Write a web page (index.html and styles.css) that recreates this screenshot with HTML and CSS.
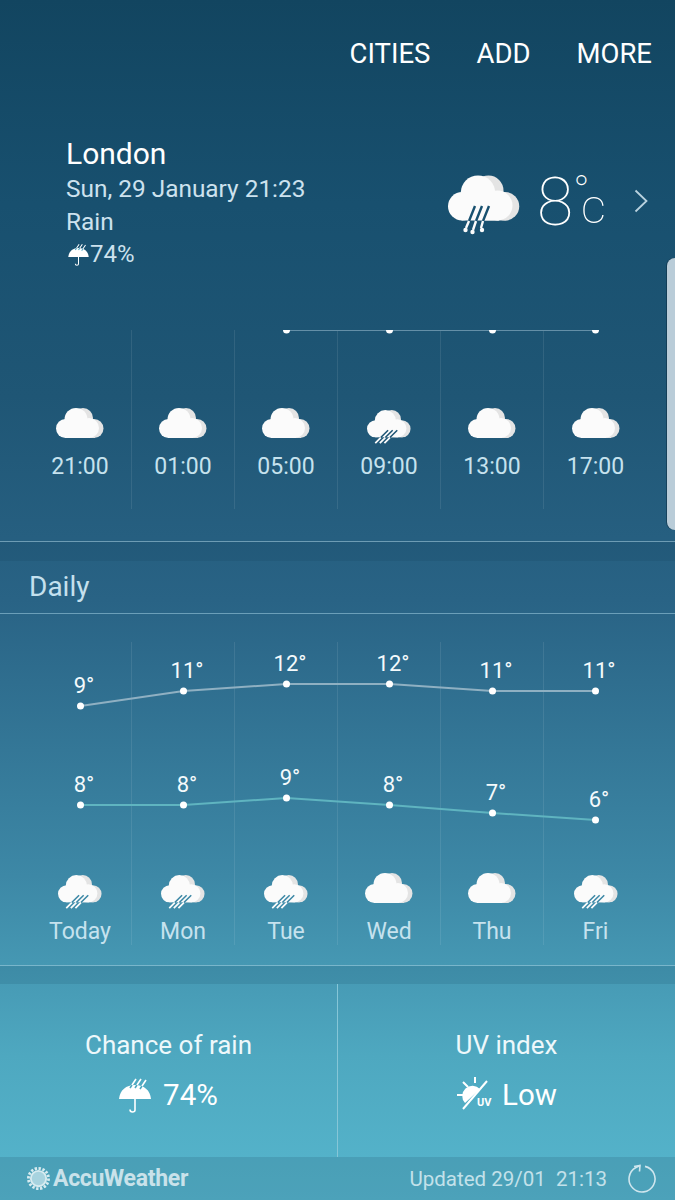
FILE: index.html
```html
<!DOCTYPE html>
<html lang="en">
<head>
<meta charset="utf-8">
<title>Weather</title>
<link rel="stylesheet" href="styles.css">
</head>
<body>
<svg class="defs" aria-hidden="true">
  <defs>
    <symbol id="cloud" viewBox="0 0 48 30">
      <circle cx="27" cy="10" r="10" fill="#e4e4e4"/>
      <circle cx="38" cy="20.5" r="9.5" fill="#e4e4e4"/>
      <rect x="24" y="14" width="15" height="16" fill="#e4e4e4"/>
      <circle cx="9.5" cy="20.5" r="9.5" fill="#fbfbfb"/>
      <circle cx="20" cy="11.5" r="11.5" fill="#fbfbfb"/>
      <circle cx="33" cy="20" r="10" fill="#fbfbfb"/>
      <rect x="9" y="16" width="25" height="14" fill="#fbfbfb"/>
    </symbol>
    <symbol id="cloud-rain" viewBox="0 0 48 37">
      <use href="#cloud" width="48" height="30"/>
      <g fill="none" stroke-width="1.700" stroke="currentColor">
        <path d="M23 22 15 30M28 22 20 30M33 22 25 30"/>
      </g>
      <g fill="none" stroke-width="1.900" stroke="#fbfbfb">
        <path d="M15 30 9 36M20 30 14 36M25 30 19 36"/>
      </g>
    </symbol>
    <symbol id="cloud-big" viewBox="0 0 72 60">
      <use href="#cloud" width="72" height="46"/>
      <g fill="none" stroke-width="2.400" stroke="currentColor">
        <path d="M27 31 21 46M34 31 28 46M41 31 35 46"/>
      </g>
      <g fill="#fbfbfb">
        <circle cx="17.500" cy="55" r="2.200"/>
        <circle cx="24.500" cy="57" r="2.200"/>
        <circle cx="34" cy="55" r="2.200"/>
      </g>
      <g fill="none" stroke-width="2.400" stroke="#fbfbfb">
        <path d="M21 46 18 53M28 46 25 55M35 46 33 53"/>
      </g>
    </symbol>
    <symbol id="umbrella" viewBox="0 0 32 36">
      <path d="M0 22C1 13 7 8 16 8s15 5 16 14Z" fill="#fff"/>
      <path d="M11 11 17 2M16 11 22 2M21 12 27 3" fill="none" stroke="#fff" stroke-width="1.600"/>
      <path d="M11 11 13 8M16 11 18 8M21 12 23 9" fill="none" stroke="#4fa9c1" stroke-width="1.600"/>
      <path d="M16 22V33Q16 35 13.500 35T11 32.500" fill="none" stroke="#fff" stroke-width="1.600"/>
    </symbol>
  </defs>
</svg>

<div class="screen">
  <nav class="topbar">
    <span>CITIES</span>
    <span>ADD</span>
    <span>MORE</span>
  </nav>

  <header class="current">
    <div class="place">
      <h1 class="city">London</h1>
      <p class="line">Sun, 29 January 21:23</p>
      <p class="line">Rain</p>
      <p class="line rain-line"><svg class="umbrella-small"><use href="#umbrella"/></svg>74%</p>
    </div>
    <div class="now">
      <svg class="cloud-big"><use href="#cloud-big"/></svg>
      <div class="temp"><span class="temp-num">8</span><span class="temp-deg">°</span><span class="temp-unit">c</span></div>
      <svg class="chevron" viewBox="0 0 14 24"><path d="M1.500 1.500 12.500 12 1.500 22.500" fill="none" stroke="#b9d2df" stroke-width="1.800"/></svg>
    </div>
  </header>

  <section class="hourly">
    <svg class="hourly-line" viewBox="0 0 675 4"><path d="M285 0.500H595" stroke="#648fa7" stroke-width="1"/><circle cx="285.500" cy="0" r="3.500" fill="#fff"/><circle cx="388.500" cy="0" r="3.500" fill="#fff"/><circle cx="491.500" cy="0" r="3.500" fill="#fff"/><circle cx="594.500" cy="0" r="3.500" fill="#fff"/></svg>
    <div class="col"><div class="icon-box"><svg class="cloud"><use href="#cloud"/></svg></div><span class="label">21:00</span></div>
    <div class="col"><div class="icon-box"><svg class="cloud"><use href="#cloud"/></svg></div><span class="label">01:00</span></div>
    <div class="col"><div class="icon-box"><svg class="cloud"><use href="#cloud"/></svg></div><span class="label">05:00</span></div>
    <div class="col"><div class="icon-box"><svg class="cloud-rain"><use href="#cloud-rain"/></svg></div><span class="label">09:00</span></div>
    <div class="col"><div class="icon-box"><svg class="cloud"><use href="#cloud"/></svg></div><span class="label">13:00</span></div>
    <div class="col"><div class="icon-box"><svg class="cloud"><use href="#cloud"/></svg></div><span class="label">17:00</span></div>
  </section>

  <div class="band band-daily"></div>
  <h2 class="daily-title">Daily</h2>

  <section class="daily">
    <svg class="chart" viewBox="0 0 675 303">
      <polyline class="hi" points="79.500,64 182.500,49 285.500,42 388.500,42 491.500,49 594.500,49"/>
      <polyline class="lo" points="79.500,163 182.500,163 285.500,156 388.500,163 491.500,171 594.500,178"/>
      <g class="dots">
        <circle cx="79.500" cy="64" r="3.500"/><circle cx="182.500" cy="49" r="3.500"/><circle cx="285.500" cy="42" r="3.500"/><circle cx="388.500" cy="42" r="3.500"/><circle cx="491.500" cy="49" r="3.500"/><circle cx="594.500" cy="49" r="3.500"/>
        <circle cx="79.500" cy="163" r="3.500"/><circle cx="182.500" cy="163" r="3.500"/><circle cx="285.500" cy="156" r="3.500"/><circle cx="388.500" cy="163" r="3.500"/><circle cx="491.500" cy="171" r="3.500"/><circle cx="594.500" cy="178" r="3.500"/>
      </g>
      <g class="temps">
        <text x="83" y="51">9°</text><text x="186" y="36">11°</text><text x="289" y="29">12°</text><text x="392" y="29">12°</text><text x="495" y="36">11°</text><text x="598" y="36">11°</text>
        <text x="83" y="150">8°</text><text x="186" y="150">8°</text><text x="289" y="143">9°</text><text x="392" y="150">8°</text><text x="495" y="158">7°</text><text x="598" y="165">6°</text>
      </g>
    </svg>
    <div class="col"><div class="icon-box"><svg class="cloud-rain"><use href="#cloud-rain"/></svg></div><span class="label">Today</span></div>
    <div class="col"><div class="icon-box"><svg class="cloud-rain"><use href="#cloud-rain"/></svg></div><span class="label">Mon</span></div>
    <div class="col"><div class="icon-box"><svg class="cloud-rain"><use href="#cloud-rain"/></svg></div><span class="label">Tue</span></div>
    <div class="col"><div class="icon-box"><svg class="cloud"><use href="#cloud"/></svg></div><span class="label">Wed</span></div>
    <div class="col"><div class="icon-box"><svg class="cloud"><use href="#cloud"/></svg></div><span class="label">Thu</span></div>
    <div class="col"><div class="icon-box"><svg class="cloud-rain"><use href="#cloud-rain"/></svg></div><span class="label">Fri</span></div>
  </section>

  <div class="band band-cards"></div>

  <section class="cards">
    <div class="card">
      <h3 class="card-title">Chance of rain</h3>
      <div class="card-value"><svg class="umbrella-big"><use href="#umbrella"/></svg><span>74%</span></div>
    </div>
    <div class="card card-uv">
      <h3 class="card-title">UV index</h3>
      <div class="card-value">
        <svg class="uv" viewBox="0 0 40 36">
          <path d="M7 32 31 4" stroke="#fff" stroke-width="2" fill="none"/>
          <path d="M9 26A10 10 0 0 1 24 12Z" fill="#fff"/>
          <path d="M19 0V6M7 5 12 10M1 18H7" stroke="#fff" stroke-width="2" fill="none"/>
          <text class="uv-text" x="21" y="29">UV</text>
        </svg>
        <span>Low</span>
      </div>
    </div>
  </section>

  <footer class="footer">
    <div class="brand">
      <svg class="sun" viewBox="0 0 24 24">
        <circle cx="12" cy="12" r="8" fill="#a7d3df" stroke="#d7ebf0" stroke-width="2"/>
        <circle cx="12" cy="12" r="10.500" fill="none" stroke="#d7ebf0" stroke-width="3" stroke-dasharray="2.500 1.600"/>
      </svg>
      <span class="brand-name">AccuWeather</span>
    </div>
    <div class="updated">
      <span class="updated-text">Updated 29/01&nbsp;&nbsp;21:13</span>
      <svg class="refresh" viewBox="0 0 30 30"><path d="M18 2.350A13 13 0 1 1 9 3.500L13 1.500" fill="none" stroke="#cfe6ee" stroke-width="1.600"/><path d="M7 2.500 13 1.500 12.500 7.500" fill="none" stroke="#cfe6ee" stroke-width="1.600"/></svg>
    </div>
  </footer>

  <div class="edge-handle"></div>
</div>
</body>
</html>
```

FILE: styles.css
```css
* { box-sizing: border-box; }
html, body { margin: 0; padding: 0; }
body { font-family: Roboto, "Liberation Sans", sans-serif; }
h1, h2, h3, p { margin: 0; font-weight: 400; }
.defs { position: absolute; width: 0; height: 0; }

.screen {
  position: relative;
  width: 675px;
  height: 1200px;
  overflow: hidden;
  display: flex;
  flex-direction: column;
  background: linear-gradient(180deg, #124560 0%, #18506f 17%, #1f5675 33%, #296385 50%, #3d88a6 73%, #4ea8c0 88%, #56b6cd 100%);
}

.topbar {
  height: 110px;
  padding: 39px 23px 0 0;
  display: flex;
  justify-content: flex-end;
  gap: 46px;
  font-size: 27.500px;
  line-height: 30px;
  color: #fff;
}

.current {
  height: 220px;
  padding: 26px 27px 0 66px;
  display: flex;
  justify-content: space-between;
  align-items: flex-start;
}
.city { font-size: 30px; line-height: 36px; color: #fff; }
.line { font-size: 24.400px; line-height: 33px; color: #cde2ee; }
.rain-line { display: flex; align-items: center; font-size: 24px; }
.umbrella-small { width: 21px; height: 23px; margin: 0 1px 0 2px; }
.now { display: flex; align-items: flex-start; padding-top: 33px; color: #18506f; }
.cloud-big { width: 72px; height: 60px; margin-top: 6px; }
.temp { position: relative; width: 85px; margin-left: 19px; height: 60px; color: #fff; font-weight: 100; }
.temp-num { position: absolute; left: -2px; top: -5px; font-size: 66px; line-height: 78px; }
.temp-deg { position: absolute; left: 34px; top: -3px; width: 8px; height: 24px; font-size: 44px; line-height: 52px; }
.temp-unit { position: absolute; left: 42px; top: 10px; font-size: 49px; line-height: 56px; }
.chevron { width: 14px; height: 24px; margin: 20px 0 0 10px; }

.hourly, .daily {
  position: relative;
  margin-left: 29px;
  width: 618px;
  display: grid;
  grid-template-columns: repeat(6, 103px);
}
.hourly { height: 179px; color: #1f5675; }
.hourly-line { position: absolute; left: -28px; top: 0; width: 675px; height: 4px; }
.col {
  display: flex;
  flex-direction: column;
  align-items: center;
  border-right: 1px solid rgba(255, 255, 255, 0.09);
}
.col:last-of-type { border-right: 0; }
.hourly .col { padding-top: 78px; }
.daily .col { padding-top: 231px; }
.icon-box { height: 36px; display: flex; justify-content: center; align-items: flex-start; }
.cloud { width: 48px; height: 30px; }
.cloud-rain { width: 44px; height: 34px; margin-top: 2px; }
.label { margin-top: 9px; font-size: 23px; line-height: 27px; color: #c6e2ee; }

.band { background: rgba(10, 50, 70, 0.12); }
.band-daily { height: 20px; margin-top: 32px; border-top: 1px solid #6d9cb4; }
.daily-title {
  height: 53px;
  padding-left: 29px;
  font-size: 28px;
  line-height: 52px;
  color: #c4e0ee;
  border-bottom: 1px solid #6b9fb9;
}

.daily { height: 303px; margin-top: 28px; color: #3d88a6; }
.chart { position: absolute; left: -28px; top: 0; width: 675px; height: 303px; }
.hi { fill: none; stroke: #8fb0c2; stroke-width: 2; }
.lo { fill: none; stroke: #5fb4c0; stroke-width: 2; }
.dots { fill: #fff; }
.temps { fill: #f4fafc; font-size: 22px; text-anchor: middle; font-family: Roboto, sans-serif; }

.band-cards { height: 19px; margin-top: 20px; border-top: 1px solid #79b6cb; }

.cards { height: 173px; display: grid; grid-template-columns: 337px 338px; }
.card {
  display: flex;
  flex-direction: column;
  align-items: center;
  padding-top: 45px;
  color: #fff;
}
.card-uv { border-left: 1px solid #86c6d7; }
.card-title { font-size: 26px; line-height: 32px; color: #eef8fb; }
.card-value { display: flex; align-items: center; gap: 12px; margin-top: 15px; height: 38px; font-size: 29.500px; }
.umbrella-big { width: 32px; height: 36px; }
.uv { width: 40px; height: 36px; }
.uv-text { font-size: 11px; font-weight: 700; fill: #fff; font-family: Roboto, sans-serif; }
.card-uv .card-value { gap: 6px; }

.footer {
  height: 43px;
  padding: 0 18px 0 27px;
  display: flex;
  justify-content: space-between;
  align-items: center;
  background: rgba(50, 110, 135, 0.28);
}
.brand { display: flex; align-items: center; gap: 3px; }
.sun { width: 23px; height: 23px; }
.brand-name { font-size: 23px; font-weight: 700; color: #c9e2ea; letter-spacing: -0.3px; }
.updated { display: flex; align-items: center; gap: 20px; }
.updated-text { font-size: 20.500px; color: #c3e1ea; }
.refresh { width: 30px; height: 30px; }

.edge-handle {
  position: absolute;
  right: 0;
  top: 258px;
  width: 8px;
  height: 272px;
  background: #b9ccd8;
  border-radius: 10px 0 0 10px;
  box-shadow: -1px 0 0 rgba(10, 40, 60, 0.5);
}
```
